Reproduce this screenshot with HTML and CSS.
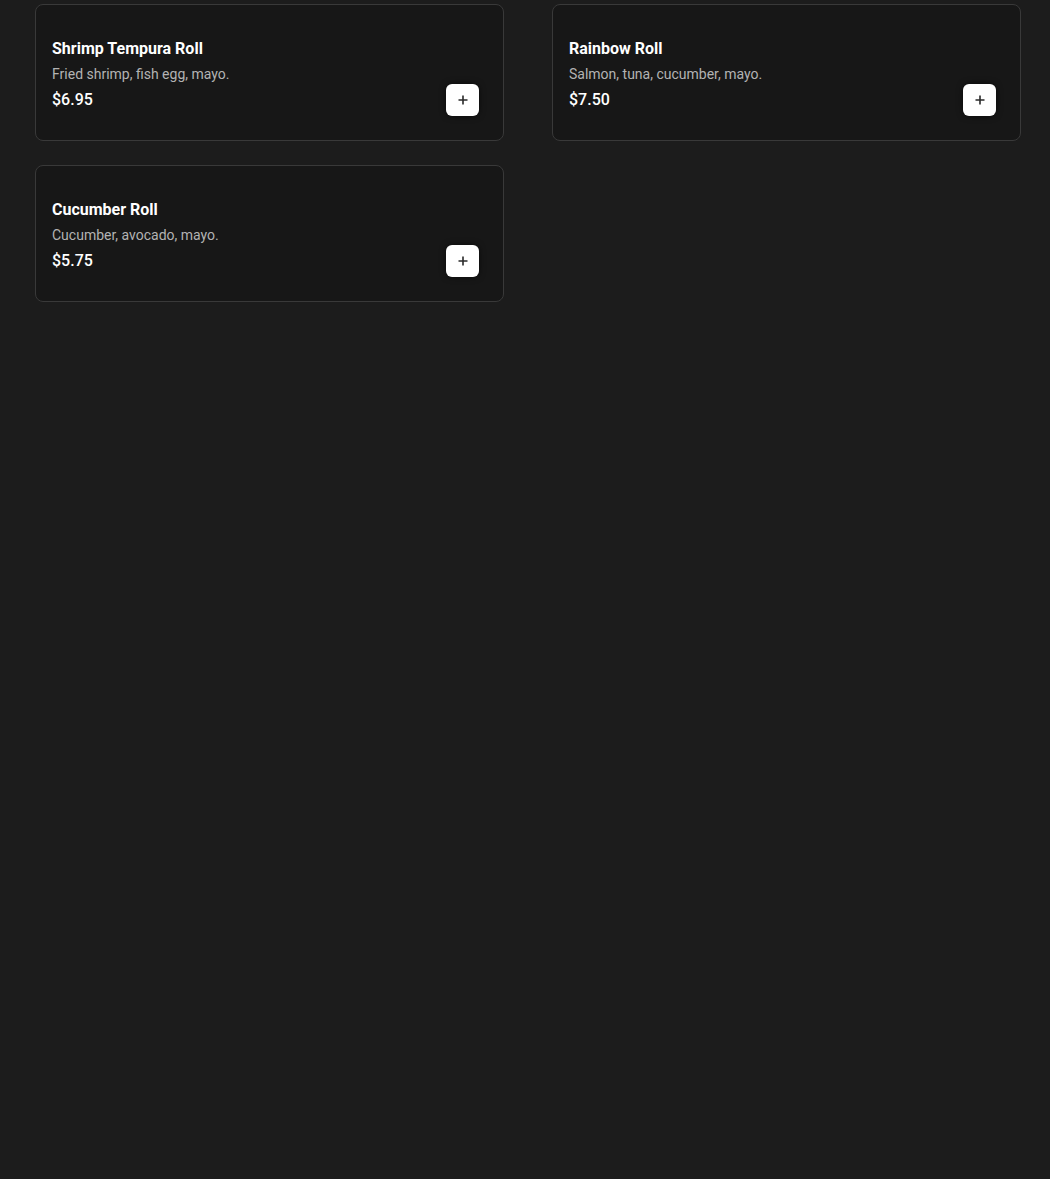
FILE: index.html
```html
<!DOCTYPE html>
<html>
<head>
<meta charset="utf-8">
<link rel="stylesheet" href="styles.css">
</head>
<body>
<main class="menu">
  <div class="card">
    <div class="info">
      <h3 class="title">Shrimp Tempura Roll</h3>
      <p class="desc">Fried shrimp, fish egg, mayo.</p>
      <div class="row"><span class="price">$6.95</span><button class="add" aria-label="Add"><svg width="10" height="10" viewBox="0 0 10 10"><path d="M5 0.5v9M0.5 5h9" stroke="#2a2a2a" stroke-width="1.6"/></svg></button></div>
    </div>
  </div>
  <div class="card">
    <div class="info">
      <h3 class="title">Rainbow Roll</h3>
      <p class="desc">Salmon, tuna, cucumber, mayo.</p>
      <div class="row"><span class="price">$7.50</span><button class="add" aria-label="Add"><svg width="10" height="10" viewBox="0 0 10 10"><path d="M5 0.5v9M0.5 5h9" stroke="#2a2a2a" stroke-width="1.6"/></svg></button></div>
    </div>
  </div>
  <div class="card">
    <div class="info">
      <h3 class="title">Cucumber Roll</h3>
      <p class="desc">Cucumber, avocado, mayo.</p>
      <div class="row"><span class="price">$5.75</span><button class="add" aria-label="Add"><svg width="10" height="10" viewBox="0 0 10 10"><path d="M5 0.5v9M0.5 5h9" stroke="#2a2a2a" stroke-width="1.6"/></svg></button></div>
    </div>
  </div>
</main>
</body>
</html>
```
FILE: styles.css
```css
html, body {
  margin: 0;
  padding: 0;
  background: #1c1c1c;
  font-family: Roboto, "Liberation Sans", sans-serif;
  color: #fff;
}
.menu {
  display: grid;
  grid-template-columns: 469px 469px;
  column-gap: 48px;
  row-gap: 24px;
  padding: 4px 0 0 35px;
}
.card {
  box-sizing: border-box;
  height: 137px;
  border: 1px solid #393939;
  border-radius: 8px;
  background: #171717;
  padding: 34px 24px 0 16px;
}
.title {
  margin: 0;
  font-size: 16px;
  line-height: 20px;
  font-weight: 700;
  color: #fff;
}
.desc {
  margin: 5px 0 0;
  font-size: 14px;
  line-height: 20px;
  color: #b3b3b3;
}
.row {
  display: flex;
  justify-content: space-between;
  align-items: center;
  height: 32px;
}
.price {
  font-size: 16px;
  line-height: 22px;
  font-weight: 500;
  color: #fff;
}
.add {
  width: 33px;
  height: 32px;
  border: none;
  border-radius: 6px;
  background: #fff;
  display: flex;
  align-items: center;
  justify-content: center;
  padding: 0;
  box-shadow: 0 0 6px rgba(0,0,0,0.6);
}
```
